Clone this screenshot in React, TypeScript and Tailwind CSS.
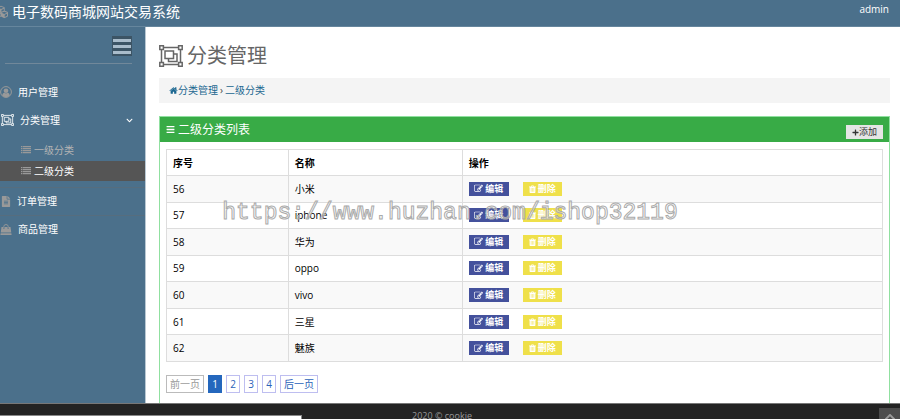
import React from "react";
import { FaBars, FaChevronDown, FaChevronUp, FaCubes, FaFileAlt, FaPlus } from "react-icons/fa";

type IconProps = { className?: string };

function ObjectGroupIcon({ className }: IconProps) {
  return (
    <svg viewBox="0 0 24 22" className={className} fill="none" stroke="currentColor" strokeWidth="1.5" aria-hidden="true">
      <path d="M5 2.5h14M5 19.5h14M2.5 5v12M21.500 5v12" />
      <path d="M.8.8h3.6v3.600H.8zM19.600.8h3.600v3.600h-3.600zM.8 17.600h3.600v3.600H.8zM19.600 17.600h3.600v3.600h-3.600z" />
      <path d="M6 6h8.500v7.500H6z" />
      <path d="M14.500 9H18v7.500h-8.500v-3" />
    </svg>
  );
}

function UserIcon({ className }: IconProps) {
  return (
    <svg viewBox="0 0 24 24" className={className} aria-hidden="true">
      <circle cx="12" cy="12" r="10.800" fill="none" stroke="currentColor" strokeWidth="2" />
      <circle cx="12" cy="9.500" r="4.700" fill="currentColor" />
      <path d="M4.500 19c.5-3.800 2-5.500 4.300-5.500 2 1.400 4.400 1.400 6.400 0 2.300 0 3.800 1.700 4.300 5.500-4 4.600-11 4.600-15 0z" fill="currentColor" />
    </svg>
  );
}

function ListIcon({ className }: IconProps) {
  return (
    <svg viewBox="0 0 10 8" className={className} fill="currentColor" aria-hidden="true">
      <path d="M0 0h1.500v1.200H0zM2 0h8v1.200H2zM0 2h1.500v1.200H0zM2 2h8v1.200H2zM0 4h1.500v1.200H0zM2 4h8v1.200H2zM0 6h1.500v1.200H0zM2 6h8v1.200H2z" />
    </svg>
  );
}

function BagIcon({ className }: IconProps) {
  return (
    <svg viewBox="0 0 24 22" className={className} aria-hidden="true">
      <path d="M7.500 9V5.500a4.500 4.500 0 0 1 9 0V9" fill="none" stroke="currentColor" strokeWidth="1.800" />
      <path d="M3 6h3v3.500h3V6h6v3.500h3V6h3l1.500 11h-21z" fill="currentColor" />
      <path d="M1.300 18.300h21.400L23.200 22H.8z" fill="currentColor" />
    </svg>
  );
}

function EditIcon({ className }: IconProps) {
  return (
    <svg viewBox="0 0 1792 1792" className={className} fill="currentColor" aria-hidden="true">
      <path d="M888 1184l116-116-152-152-116 116v56h96v96h56zm440-720q-16-16-33 1l-350 350q-17 17-1 33t33-1l350-350q17-17 1-33zm80 594v190q0 119-84.500 203.500t-203.500 84.500h-832q-119 0-203.500-84.500t-84.500-203.500v-832q0-119 84.500-203.500t203.500-84.500h832q63 0 117 25 15 7 18 23 3 17-9 29l-49 49q-14 14-32 8-23-6-45-6h-832q-66 0-113 47t-47 113v832q0 66 47 113t113 47h832q66 0 113-47t47-113v-126q0-13 9-22l64-64q15-15 35-7t20 29zm-96-738l288 288-672 672h-288v-288zm444 132l-92 92-288-288 92-92q28-28 68-28t68 28l152 152q28 28 28 68t-28 68z" />
    </svg>
  );
}

function TrashIcon({ className }: IconProps) {
  return (
    <svg viewBox="0 0 14 16" className={className} fill="currentColor" fillRule="evenodd" aria-hidden="true">
      <path d="M4 3l1-2h4l1 2h4v1.400h-1.200V14.500q0 1.500-1.300 1.500h-9q-1.300 0-1.300-1.500V4.400H0V3zm1.400 0h3.200l-.4-.9H5.800zM3.700 6v7.500h1V6zm2.800 0v7.500h1V6zm2.800 0v7.500h1V6z" />
    </svg>
  );
}

function HomeIcon({ className }: IconProps) {
  return (
    <svg viewBox="0 0 1792 1792" className={className} fill="currentColor" aria-hidden="true">
      <path d="M1472 992v480q0 26-19 45t-45 19h-384v-384h-256v384h-384q-26 0-45-19t-19-45v-480l576-477 575 474q1 2 1 6zm223-69l-62 74q-8 9-21 11h-3q-13 0-21-7l-692-577-692 577q-12 8-24 7-13-2-21-11l-62-74q-8-10-7-23.500t11-21.500l719-599q32-26 76-26t76 26l244 204v-195q0-14 9-23t23-9h192q14 0 23 9t9 23v408l219 182q10 8 11 21.500t-7 23.500z" />
    </svg>
  );
}

const rows = [
  { id: 56, name: "小米" },
  { id: 57, name: "iphone" },
  { id: 58, name: "华为" },
  { id: 59, name: "oppo" },
  { id: 60, name: "vivo" },
  { id: 61, name: "三星" },
  { id: 62, name: "魅族" },
];

function Sidebar() {
  return (
    <nav className="w-[146px] shrink-0 border-r border-[#b9c8d3] bg-[#4b708b] pt-[9px] text-[10px] text-white">
      <div className="mr-[13px] ml-[5px] flex h-7 items-start justify-end border-b border-[#71889a]">
        <button type="button" aria-label="菜单" className="flex size-5 flex-col justify-center gap-[3px] bg-[#3c5465] px-px">
          <span className="h-[3px] bg-[#a9bccb]" />
          <span className="h-[3px] bg-[#a9bccb]" />
          <span className="h-[3px] bg-[#a9bccb]" />
        </button>
      </div>
      <ul className="pt-[14px]">
        <li>
          <a href="#users" className="flex h-7 items-center gap-[6px]">
            <UserIcon className="size-3 text-[#999]" />用户管理
          </a>
        </li>
        <li>
          <a href="#categories" className="flex h-7 items-center gap-[6px] pl-px">
            <ObjectGroupIcon className="h-3 w-[13px]" />分类管理
            <FaChevronDown className="mr-3 ml-auto size-[7px]" />
          </a>
          <ul className="h-[53px] pt-[5px]">
            <li>
              <a href="#level-1" className="flex h-[22px] items-center gap-[3px] pl-[21px] text-[#b4b4b4]">
                <ListIcon className="h-2 w-[10px] text-[#999]" />一级分类
              </a>
            </li>
            <li>
              <a href="#level-2" className="flex h-5 items-center gap-[3px] bg-[#555] pl-[21px]">
                <ListIcon className="h-2 w-[10px] text-[#999]" />二级分类
              </a>
            </li>
          </ul>
        </li>
        <li className="border-t border-[#566d7e]">
          <a href="#orders" className="flex h-[27px] items-center gap-[6px] pl-px">
            <FaFileAlt className="h-[11px] w-[10px] text-[#999]" />订单管理
          </a>
        </li>
        <li className="border-t border-[#566d7e]">
          <a href="#goods" className="flex h-[27px] items-center gap-[6px]">
            <BagIcon className="h-[11px] w-3 text-[#999]" />商品管理
          </a>
        </li>
      </ul>
    </nav>
  );
}

function CategoryTable() {
  return (
    <table className="h-[213px] w-full table-fixed border-collapse border border-[#ddd] text-left text-[10px] leading-[14px] text-black">
      <thead>
        <tr className="h-[26px]">
          <th className="w-[17%] border border-[#ddd] px-[6px]">序号</th>
          <th className="w-[174px] border border-[#ddd] px-[6px]">名称</th>
          <th className="border border-[#ddd] px-[6px]">操作</th>
        </tr>
      </thead>
      <tbody>
        {rows.map((r) => (
          <tr key={r.id} className="h-[26px] odd:bg-[#f9f9f9]">
            <td className="border border-[#ddd] px-[6px]">{r.id}</td>
            <td className="border border-[#ddd] px-[6px]">{r.name}</td>
            <td className="border border-[#ddd] px-[6px]">
              <div className="flex gap-[14px] text-[9px] font-bold text-white">
                <button type="button" className="flex h-[14px] w-10 items-center justify-center gap-[2px] bg-[#44519c]">
                  <EditIcon className="size-[9px]" />编辑
                </button>
                <button type="button" className="flex h-[14px] w-[39px] items-center justify-center gap-[2px] bg-[#efe04a]">
                  <TrashIcon className="h-2 w-[7px]" />删除
                </button>
              </div>
            </td>
          </tr>
        ))}
      </tbody>
    </table>
  );
}

function Pagination() {
  return (
    <div className="mt-[13px] flex gap-1 text-[10px] leading-4 text-[#2b62b9]">
      <button type="button" disabled className="border border-[#bbb] px-[3px] text-[#999]">前一页</button>
      <button type="button" aria-current="page" className="w-[14px] border border-[#2467bd] bg-[#2467bd] text-white">1</button>
      {[2, 3, 4].map((n) => (
        <button type="button" key={n} className="w-[14px] border border-[#bebef0]">{n}</button>
      ))}
      <button type="button" className="border border-[#bebef0] px-[3px]">后一页</button>
    </div>
  );
}

export default function App() {
  return (
    <div className="relative flex h-screen flex-col overflow-hidden bg-white font-['Open_Sans','Noto_Sans_CJK_SC',sans-serif]">
      <header className="flex h-[27px] shrink-0 items-start justify-between border-b border-[#66869d] bg-[#4b708b] pr-[11px] text-white">
        <div className="flex items-center gap-1 text-sm leading-6">
          <FaCubes className="-ml-[6px] size-[14px] text-[#999]" />
          <h1>电子数码商城网站交易系统</h1>
        </div>
        <span className="text-[10px] leading-[18px]">admin</span>
      </header>

      <div className="flex shrink-0">
        <Sidebar />
        <main className="min-w-0 flex-1 pr-[10px] pl-[13px]">
          <h2 className="flex h-[51px] items-center gap-1 pt-[6px] text-xl text-[#666]">
            <ObjectGroupIcon className="h-[22px] w-6" />分类管理
          </h2>
          <div className="flex h-[25px] items-center bg-[#f4f4f4] px-[10px] text-[10px] text-[#1a6690]">
            <HomeIcon className="size-[9px]" />
            <a href="#categories">分类管理</a>
            <span className="px-[2px] text-[#444]">›</span>
            <a href="#level-2">二级分类</a>
          </div>
          <section className="mt-[13px] border border-b-0 border-[#90e0a0]">
            <div className="flex h-[25px] items-start justify-between bg-[#38ab46] pr-[6px] pl-[6px] text-white">
              <h3 className="flex items-center gap-[3px] text-xs leading-[25px]">
                <FaBars className="size-[9px]" />二级分类列表
              </h3>
              <button type="button" className="mt-2 flex h-[14px] w-[37px] items-center justify-center bg-[#e5e5e5] text-[9px] text-[#333]">
                <FaPlus className="size-[7px]" />添加
              </button>
            </div>
            <div className="px-[6px] pt-[7px] pb-[10px]">
              <CategoryTable />
              <Pagination />
            </div>
          </section>
        </main>
      </div>

      <footer className="flex-1 border-t border-[#777] bg-[#232323]">
        <p className="pt-[6px] pr-4 text-center text-[9px] leading-3 text-[#999]">2020 © cookie</p>
      </footer>
      <button type="button" aria-label="回到顶部" className="absolute right-0 bottom-0 flex h-[11px] w-[21px] justify-center overflow-hidden bg-[#4c4c4c] pt-[3px] text-[#999]">
        <FaChevronUp className="size-3 shrink-0" />
      </button>
      <div className="absolute bottom-0 left-0 h-1 w-[302px] border-t border-r border-[#888] bg-white" />
      <p className="pointer-events-none absolute inset-x-0 top-[199px] text-center font-['Liberation_Mono',monospace] text-[23px] leading-7 text-white/40 [-webkit-text-stroke:1px_#aaaaaa]">
        https://www.huzhan.com/ishop32119
      </p>
    </div>
  );
}
